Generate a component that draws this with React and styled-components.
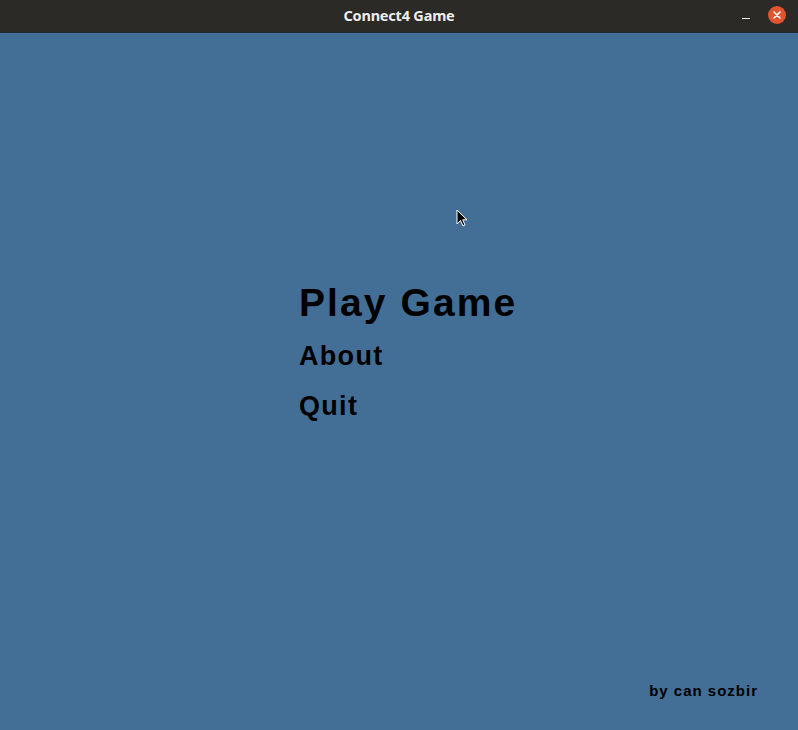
import React from 'react';
import styled, { createGlobalStyle } from 'styled-components';

const GlobalStyle = createGlobalStyle`
  html, body {
    margin: 0;
    padding: 0;
    background: #436f96;
  }
`;

const menuItems = [
  { label: 'Play Game', big: true },
  { label: 'About' },
  { label: 'Quit' },
];

const App = () => (
  <Window>
    <GlobalStyle />
    <TitleBar>
      <Title>Connect4 Game</Title>
      <Controls>
        <Minimize />
        <CloseButton>
          <svg width="10" height="10" viewBox="0 0 10 10">
            <path d="M2 2 L8 8 M8 2 L2 8" stroke="#fff" strokeWidth="1.6" strokeLinecap="round" />
          </svg>
        </CloseButton>
      </Controls>
    </TitleBar>
    <Screen>
      <Menu>
        {menuItems.map((item) => (
          <MenuItem key={item.label} $big={item.big}>
            {item.label}
          </MenuItem>
        ))}
      </Menu>
      <Credit>by can sozbir</Credit>
      <Cursor viewBox="0 0 12 19" width="12" height="19">
        <path
          d="M1 1 L1 15 L4.5 11.5 L7 17 L9 16 L6.7 10.8 L11 10.8 Z"
          fill="#000"
          stroke="#fff"
          strokeWidth="1"
          strokeLinejoin="round"
        />
      </Cursor>
    </Screen>
  </Window>
);

export default App;

const Window = styled.div`
  width: 798px;
  height: 730px;
  display: flex;
  flex-direction: column;
  overflow: hidden;
`;

const TitleBar = styled.div`
  height: 32px;
  flex: none;
  background: #2b2a26;
  border-bottom: 1px solid #1e2a33;
  display: flex;
  align-items: center;
  justify-content: center;
  position: relative;
`;

const Title = styled.div`
  font-family: 'Noto Sans', 'DejaVu Sans', sans-serif;
  font-weight: 700;
  font-size: 14.5px;
  color: #eeeeec;
  letter-spacing: -0.2px;
  margin-top: -2px;
`;

const Controls = styled.div`
  position: absolute;
  right: 12px;
  top: 6px;
  display: flex;
  align-items: center;
  gap: 18px;
`;

const Minimize = styled.div`
  width: 8px;
  height: 1px;
  background: #eeeeec;
  margin-top: 6px;
`;

const CloseButton = styled.div`
  width: 18px;
  height: 18px;
  border-radius: 50%;
  background: #e0552f;
  display: flex;
  align-items: center;
  justify-content: center;
`;

const Screen = styled.div`
  flex: 1;
  position: relative;
  background: #436f96;
  display: flex;
  flex-direction: column;
  padding: 241px 40px 31px 299px;
`;

const Menu = styled.div`
  display: flex;
  flex-direction: column;
  flex: 1;
`;

const MenuItem = styled.div`
  font-family: 'Liberation Sans', Arial, sans-serif;
  font-weight: 700;
  color: #000;
  font-size: ${(p) => (p.$big ? '39px' : '27px')};
  line-height: ${(p) => (p.$big ? '57px' : '50px')};
  letter-spacing: ${(p) => (p.$big ? '2.1px' : '1.3px')};
`;

const Credit = styled.div`
  align-self: flex-end;
  font-family: 'Liberation Sans', Arial, sans-serif;
  font-weight: 700;
  font-size: 15px;
  line-height: 17px;
  letter-spacing: 1px;
  color: #000;
`;

const Cursor = styled.svg`
  position: absolute;
  left: 456px;
  top: 176px;
`;
